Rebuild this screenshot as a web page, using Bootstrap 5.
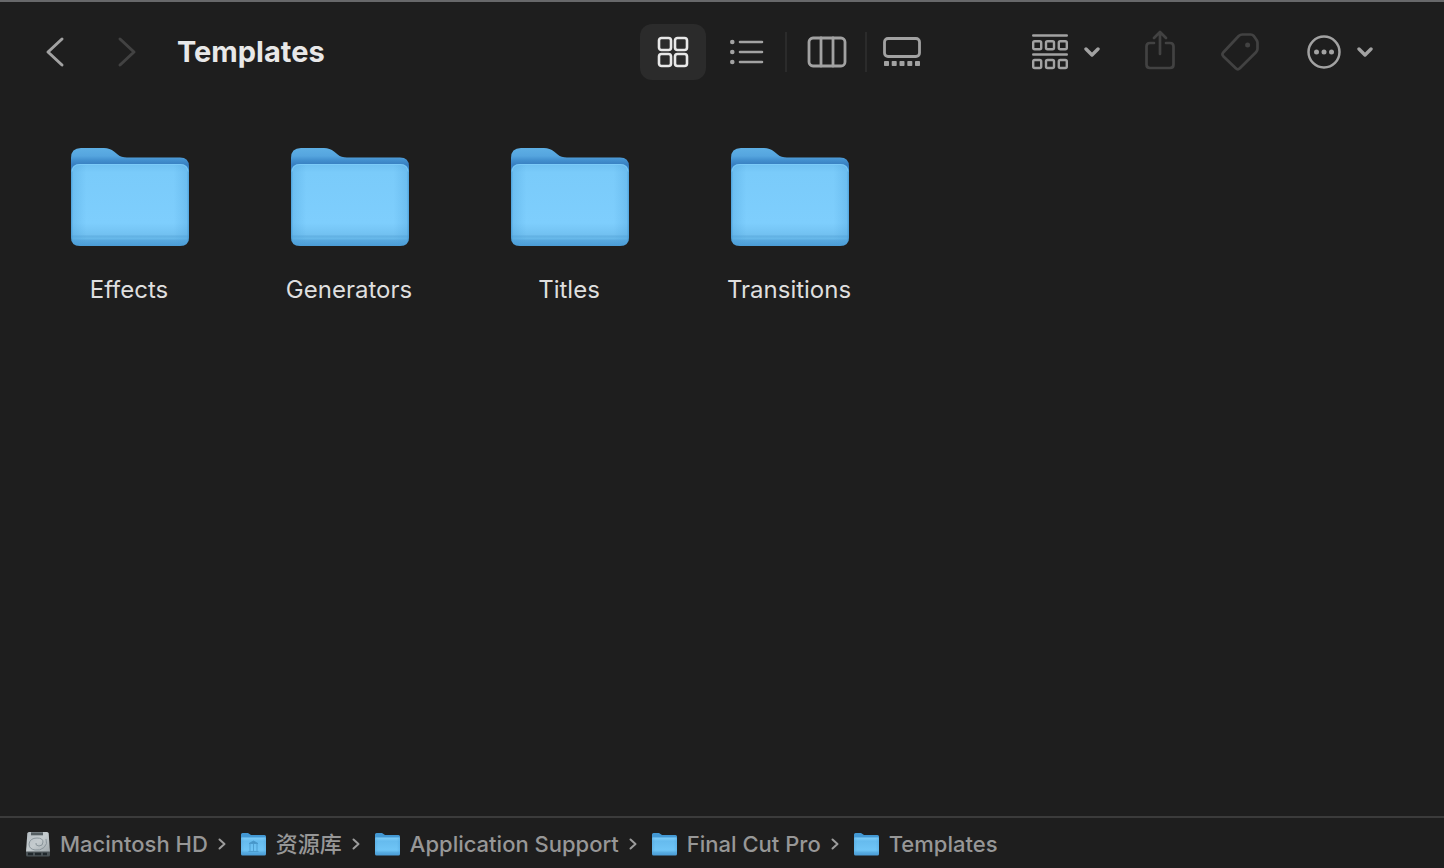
<!DOCTYPE html>
<html lang="en">
<head>
<meta charset="utf-8">
<meta name="viewport" content="width=device-width, initial-scale=1">
<title>Templates</title>
<link href="https://cdn.jsdelivr.net/npm/bootstrap@5.3.0/dist/css/bootstrap.min.css" rel="stylesheet">
<style>
  body { background: #1e1e1e; color: #dfdfdf; font-family: Inter, "Noto Sans CJK SC", sans-serif; }
  .finder { border-top: 2px solid #67686a; }
  .tool { --bs-btn-color: #a2a2a2; --bs-btn-hover-color: #d0d0d0; --bs-btn-active-color: #e8e8e8; --bs-btn-disabled-color: #424242; --bs-btn-disabled-opacity: 1; --bs-btn-padding-x: 0; --bs-btn-padding-y: 0; --bs-btn-border-width: 0; --bs-btn-active-bg: #2b2b2b; --bs-btn-border-radius: 12px; display: flex; align-items: center; justify-content: center; height: 56px; }
  .tool svg { flex: none; fill: none; stroke: currentColor; stroke-linecap: round; stroke-linejoin: round; }
  .toolbar-row { height: 100px; }
  .title-zone { width: calc(50% - 82px); padding-left: 19px; }
  .w-nav { width: 72px; }
  .w-sel { width: 66px; margin-right: 1px; }
  .w-view { width: 80px; }
  .w-end { width: 70px; }
  .w-menu { width: 88px; gap: 16px; }
  .w-group { margin-right: 10px; }
  .ruled { position: relative; }
  .ruled::after { content: ""; position: absolute; right: 0; top: 8px; bottom: 8px; width: 2px; background: #2b2b2b; }
  .window-title { font-size: 29px; line-height: 36px; font-weight: 700; color: #e8e8e8; padding-left: 14px; }
  .right-zone { padding-right: 60px; }
  .files { padding: 46px 19px; row-gap: 40px; }
  .file { width: 220px; color: #dfdfdf; }
  .file span { font-size: 24px; line-height: 32px; margin-top: 26px; }
  .pathbar { border-top: 2px solid #3b3b3b; height: 52px; padding: 2px 26px 0; font-size: 22px; line-height: 28px; font-weight: 500; }
  .pathbar a { color: #979797; gap: 10px; }
  .pathbar ol { gap: 15px; }
  .pathbar li { gap: 10px; }
  .pathbar .sep { fill: none; stroke: #9c9c9c; stroke-width: 2; stroke-linecap: round; stroke-linejoin: round; }
</style>
</head>
<body>
<svg width="0" height="0" class="position-absolute" aria-hidden="true">
  <defs>
    <linearGradient id="back" x1="0" y1="0" x2="0" y2="1">
      <stop offset="0" stop-color="#5eafe4"/><stop offset=".09" stop-color="#55a5df"/><stop offset=".14" stop-color="#428fce"/><stop offset=".19" stop-color="#377fc1"/><stop offset="1" stop-color="#3f8bc9"/>
    </linearGradient>
    <linearGradient id="front" x1="0" y1="0" x2="0" y2="1">
      <stop offset="0" stop-color="#6fc0f1"/><stop offset=".1" stop-color="#7acbfa"/><stop offset=".72" stop-color="#7ecefd"/><stop offset=".86" stop-color="#72c1f1"/><stop offset=".88" stop-color="#62b1e3"/><stop offset=".91" stop-color="#68b9ea"/><stop offset=".93" stop-color="#59a9df"/><stop offset="1" stop-color="#4b9cd6"/>
    </linearGradient>
    <linearGradient id="sides">
      <stop offset="0" stop-color="#3d91cd" stop-opacity=".75"/><stop offset=".02" stop-color="#4b9fd9" stop-opacity=".3"/><stop offset=".13" stop-color="#4b9fd9" stop-opacity="0"/><stop offset=".87" stop-color="#4b9fd9" stop-opacity="0"/><stop offset=".98" stop-color="#4b9fd9" stop-opacity=".3"/><stop offset="1" stop-color="#3d91cd" stop-opacity=".75"/>
    </linearGradient>
    <linearGradient id="smallfront" x1="0" y1="0" x2="0" y2="1">
      <stop offset="0" stop-color="#7fcffa"/><stop offset=".2" stop-color="#66bbee"/><stop offset=".7" stop-color="#6fc5f6"/><stop offset=".85" stop-color="#55a9df"/><stop offset="1" stop-color="#4b9cd6"/>
    </linearGradient>
    <linearGradient id="metal" x1="0" y1="0" x2="1" y2="1">
      <stop offset="0" stop-color="#b4bbc0"/><stop offset=".5" stop-color="#c5cccf"/><stop offset="1" stop-color="#a0a8ac"/>
    </linearGradient>
    <symbol id="folder" viewBox="-2 0 120 100">
      <path d="M0 92V11Q0 1 10 1h23q6 0 10 3.500l5 4q3 2.500 9 2.500h52q9 0 9 9v72z" fill="#111"/>
      <path d="M0 88V10Q0 0 10 0h23q6 0 10 3.500l4 3.300q3 2.600 9 2.600h53q9 0 9 9V88z" fill="url(#back)"/>
      <path d="M0 25q0-9 9-9h100q9 0 9 9v64q0 9-9 9H9q-9 0-9-9z" fill="url(#front)"/>
      <path d="M0 25q0-9 9-9h100q9 0 9 9v64q0 9-9 9H9q-9 0-9-9z" fill="url(#sides)"/>
      <path d="M1 23.500q1-7 8-7h100q7 0 8 7" fill="none" stroke="#83d0fc" stroke-opacity=".7"/>
    </symbol>
    <symbol id="smallfolder" viewBox="0 0 25 24">
      <path d="M0 21V2.500Q0 1 1.500 1H7l3 2h13.500Q25 3 25 4.500V21z" fill="#4398d3"/>
      <path d="M0 6.500Q0 5.500 1 5.500h23q1 0 1 1V22q0 1.500-1.500 1.500h-22Q0 23.500 0 22z" fill="url(#smallfront)"/>
      <path d="M0 6h25v16H0z" fill="url(#sides)"/>
    </symbol>
  </defs>
</svg>

<div class="finder d-flex flex-column min-vh-100">
  <header class="toolbar-row d-flex align-items-center">
    <div class="title-zone d-flex align-items-center flex-shrink-0">
      <button type="button" class="btn tool w-nav" aria-label="Back"><svg width="20" height="32" stroke-width="3"><path d="M17 3 3 16l14 13"/></svg></button>
      <button type="button" class="btn tool w-nav" aria-label="Forward" disabled><svg width="20" height="32" stroke-width="3"><path d="m3 3 14 13L3 29"/></svg></button>
      <h1 class="window-title mb-0">Templates</h1>
    </div>
    <div class="d-flex flex-shrink-0" role="group" aria-label="View">
      <button type="button" class="btn tool w-sel active" aria-label="Icons" aria-pressed="true"><svg width="32" height="32" stroke-width="2.600"><rect x="2" y="2" width="12" height="12" rx="2.500"/><rect x="18" y="2" width="12" height="12" rx="2.500"/><rect x="2" y="18" width="12" height="12" rx="2.500"/><rect x="18" y="18" width="12" height="12" rx="2.500"/></svg></button>
      <button type="button" class="btn tool w-view ruled" aria-label="List"><svg width="34" height="26" stroke-width="2.600"><path d="M10 3h22M10 13h22M10 23h22"/><g fill="currentColor" stroke="none"><circle cx="2.300" cy="3" r="2.300"/><circle cx="2.300" cy="13" r="2.300"/><circle cx="2.300" cy="23" r="2.300"/></g></svg></button>
      <button type="button" class="btn tool w-view ruled" aria-label="Columns"><svg width="40" height="32" stroke-width="2.800"><rect x="2" y="2" width="36" height="28" rx="4"/><path d="M14 2v28M26 2v28"/></svg></button>
      <button type="button" class="btn tool w-end" aria-label="Gallery"><svg width="38" height="30" stroke-width="2.800"><rect x="1.500" y="1.500" width="35" height="18" rx="3.500"/><g fill="currentColor" stroke="none"><rect x="1" y="24" width="5" height="5" rx=".7"/><rect x="8.700" y="24" width="5" height="5" rx=".7"/><rect x="16.500" y="24" width="5" height="5" rx=".7"/><rect x="24.300" y="24" width="5" height="5" rx=".7"/><rect x="32" y="24" width="5" height="5" rx=".7"/></g></svg></button>
    </div>
    <div class="right-zone d-flex flex-shrink-0 ms-auto">
      <button type="button" class="btn tool w-menu w-group" aria-label="Group"><svg width="36" height="36" stroke-width="2.400"><path d="M1.200 1.500h33.600M1.200 20.500h33.600"/><rect x="1.200" y="7.200" width="8" height="8" rx="1.500"/><rect x="14" y="7.200" width="8" height="8" rx="1.500"/><rect x="26.800" y="7.200" width="8" height="8" rx="1.500"/><rect x="1.200" y="26" width="8" height="8" rx="1.500"/><rect x="14" y="26" width="8" height="8" rx="1.500"/><rect x="26.800" y="26" width="8" height="8" rx="1.500"/></svg><svg width="16" height="10" stroke-width="3.400"><path d="m2 2 6 6 6-6"/></svg></button>
      <button type="button" class="btn tool w-view" aria-label="Share" disabled><svg width="30" height="44" stroke-width="2.700"><path d="M9 13H5q-3.500 0-3.500 3.500v18q0 3.500 3.500 3.500h20q3.500 0 3.500-3.500v-18Q28.500 13 25 13h-4M15 24V3M9 8l6-6 6 6"/></svg></button>
      <button type="button" class="btn tool w-view" aria-label="Tags" disabled><svg width="38" height="38" stroke-width="2.700"><path d="M21.500 1.500h8q2 0 3.300 1.500l2.600 3.700q1.100 1.500 1.100 3v6q0 2-1.500 3.500L18.800 35.300q-2 2-4 0L2.500 23.500q-2-2-.3-4L17.700 3q1.600-1.500 3.800-1.500z"/><circle cx="26.600" cy="12" r="2.500" fill="currentColor" stroke="none"/></svg></button>
      <button type="button" class="btn tool w-menu ms-3" aria-label="More"><svg width="34" height="34" stroke-width="2.500"><circle cx="17" cy="17" r="15.500"/><g fill="currentColor" stroke="none"><circle cx="9.500" cy="17" r="2.500"/><circle cx="17" cy="17" r="2.500"/><circle cx="24.500" cy="17" r="2.500"/></g></svg><svg width="16" height="10" stroke-width="3.400"><path d="m2 2 6 6 6-6"/></svg></button>
    </div>
  </header>

  <main class="files d-flex flex-wrap align-content-start flex-grow-1">
    <a href="#" class="file d-flex flex-column align-items-center text-decoration-none"><svg width="120" height="100"><use href="#folder"/></svg><span>Effects</span></a>
    <a href="#" class="file d-flex flex-column align-items-center text-decoration-none"><svg width="120" height="100"><use href="#folder"/></svg><span>Generators</span></a>
    <a href="#" class="file d-flex flex-column align-items-center text-decoration-none"><svg width="120" height="100"><use href="#folder"/></svg><span>Titles</span></a>
    <a href="#" class="file d-flex flex-column align-items-center text-decoration-none"><svg width="120" height="100"><use href="#folder"/></svg><span>Transitions</span></a>
  </main>

  <nav class="pathbar d-flex align-items-center text-nowrap" aria-label="Path">
    <ol class="list-unstyled d-flex align-items-center mb-0">
      <li class="d-flex align-items-center"><a href="#" class="d-flex align-items-center text-decoration-none"><svg width="24" height="26"><path d="M3 1h18q1.500 0 1.700 1.500L24 21H0L1.300 2.500Q1.500 1 3 1z" fill="url(#metal)"/><path d="M0 20.500h24V24q0 1.500-1.500 1.500h-21Q0 25.500 0 24z" fill="#4b5357"/><path d="M2 23h5m2 0h6m2 0h4" stroke="#20282c" stroke-width="2.500"/><path d="M5 2.800h12" stroke="#555e62" stroke-width="3"/><path d="M20 8q2 5-2 8.500T9 19q-6-1-6-6 1-6 8-6 6 0 6 4t-4 4q-4-.5-3-3" fill="none" stroke="#8a959b"/></svg>Macintosh HD</a><svg class="sep" width="8" height="12"><path d="m1.500 1.500 5 4.500-5 4.500"/></svg></li>
      <li class="d-flex align-items-center"><a href="#" class="d-flex align-items-center text-decoration-none"><svg width="25" height="26" viewBox="0 0 25 24"><use href="#smallfolder"/><path d="M8 11.500 12.500 9l4.500 2.500zM7.500 19.500h10M9 12v7m3.500-7v7m3.500-7v7" fill="#4796c9" stroke="#4796c9" stroke-opacity=".8"/></svg>资源库</a><svg class="sep" width="8" height="12"><path d="m1.500 1.500 5 4.500-5 4.500"/></svg></li>
      <li class="d-flex align-items-center"><a href="#" class="d-flex align-items-center text-decoration-none"><svg width="25" height="26"><use href="#smallfolder"/></svg>Application Support</a><svg class="sep" width="8" height="12"><path d="m1.500 1.500 5 4.500-5 4.500"/></svg></li>
      <li class="d-flex align-items-center"><a href="#" class="d-flex align-items-center text-decoration-none"><svg width="25" height="26"><use href="#smallfolder"/></svg>Final Cut Pro</a><svg class="sep" width="8" height="12"><path d="m1.500 1.500 5 4.500-5 4.500"/></svg></li>
      <li class="d-flex align-items-center"><a href="#" class="d-flex align-items-center text-decoration-none" aria-current="page"><svg width="25" height="26"><use href="#smallfolder"/></svg>Templates</a></li>
    </ol>
  </nav>
</div>
<script src="https://cdn.jsdelivr.net/npm/bootstrap@5.3.0/dist/js/bootstrap.bundle.min.js"></script>
</body>
</html>
